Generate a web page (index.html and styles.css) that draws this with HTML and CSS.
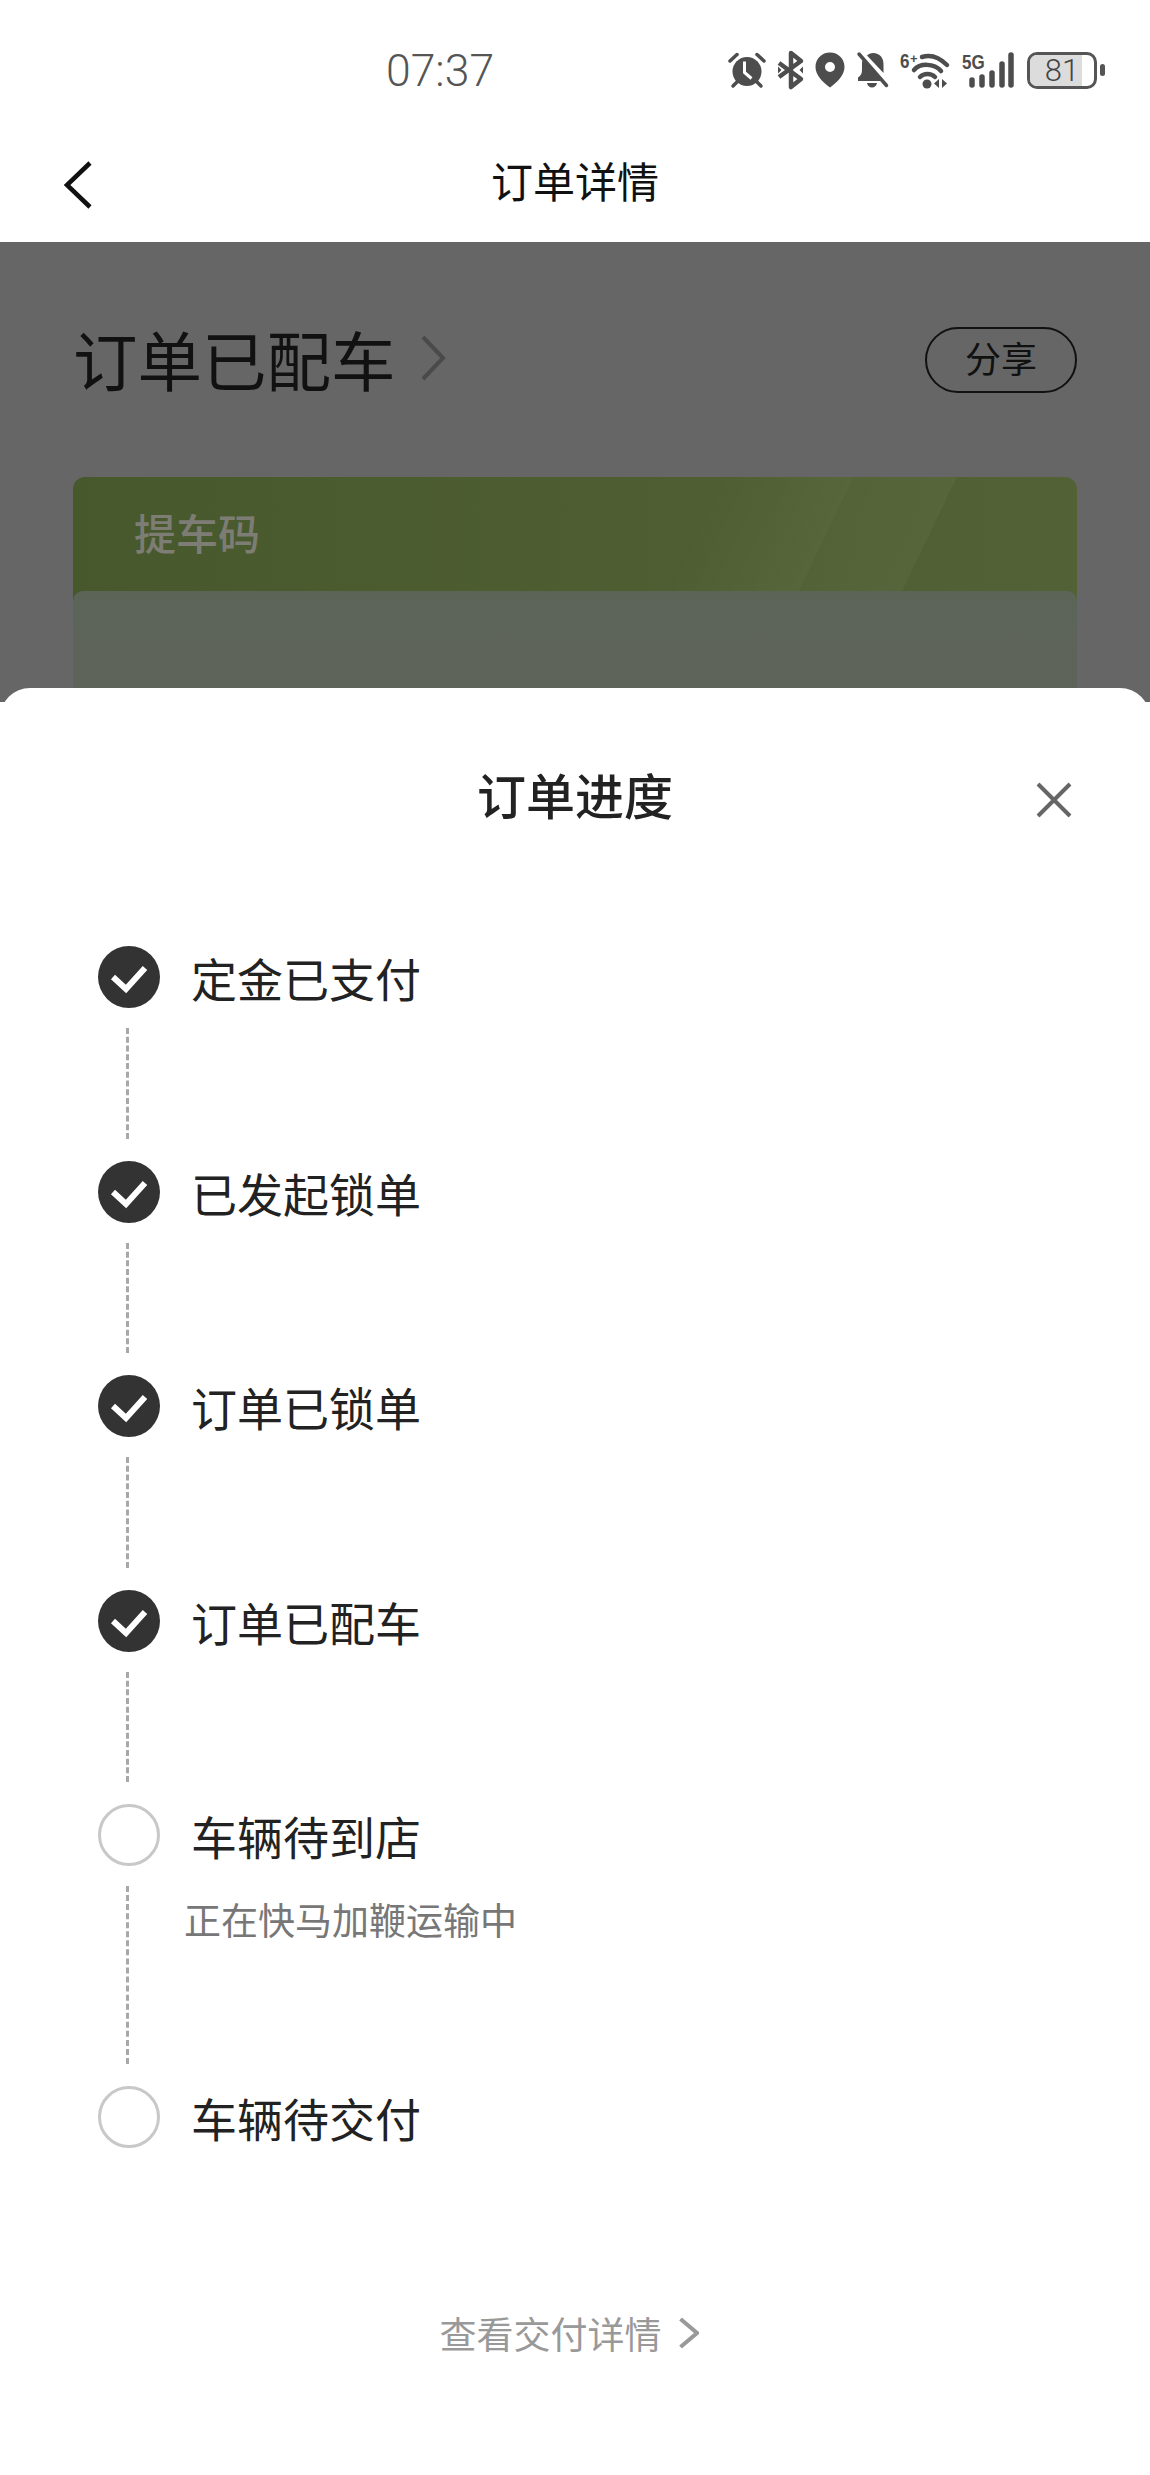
FILE: index.html
```html
<!DOCTYPE html>
<html lang="zh-CN">

<head>
    <meta charset="UTF-8">
    <meta name="viewport" content="width=device-width, initial-scale=1.0">
    <title>订单进度</title>
    <link rel="stylesheet" href="styles.css">
</head>

<body>
    <div class="phone">
        <!-- Status bar -->
        <div class="status-bar">
            <span class="clock">07:37</span>
            <div class="status-icons">
                <svg class="icon-alarm" viewBox="0 0 38 36" width="38" height="36">
                    <path d="M2 9 9 2.500M36 9 29 2.500" fill="none" stroke="#4d4d4d" stroke-width="3.500" stroke-linecap="round"/>
                    <circle cx="19" cy="19.500" r="14.500" fill="#4d4d4d"/>
                    <path d="M5 34l4.500-4.500M33 34l-4.500-4.500" fill="none" stroke="#4d4d4d" stroke-width="3.500" stroke-linecap="round"/>
                    <path d="M16.500 9.500v11l7 6" fill="none" stroke="#fff" stroke-width="3"/>
                </svg>
                <svg class="icon-bt" viewBox="0 0 25 36" width="25" height="36">
                    <path d="M1 11 23 27 13 35V1l10 8L1 25" fill="none" stroke="#4d4d4d" stroke-width="4.500" stroke-linejoin="round"/>
                    <path d="M0 14.500 3.500 18 0 21.500zM25 14.500 21.500 18 25 21.500z" fill="#4d4d4d"/>
                </svg>
                <svg class="icon-pin" viewBox="0 0 30 36" width="30" height="36">
                    <path fill-rule="evenodd" fill="#4d4d4d" d="M15 0.500C6.700 0.500 0.500 6.800 0.500 15c0 8 7.500 15.500 14.500 20.500C22 30.500 29.500 23 29.500 15 29.500 6.800 23.300 0.500 15 0.500zM15 10a5 5 0 1 1 0 10 5 5 0 0 1 0-10z"/>
                </svg>
                <svg class="icon-bell" viewBox="0 0 31 36" width="31" height="36">
                    <path fill="#4d4d4d" d="M6 7 24 26.500V29H1v-3.500c3-2 4-4 4-8V12c0-2 .300-3.500 1-5zM10 3.500C11.500 2 13.500 1 16 1c7 0 10.500 5 10.500 11v9z"/>
                    <path d="M2 2 29.500 33.500" stroke="#4d4d4d" stroke-width="3.500" stroke-linecap="round"/>
                    <path fill="#4d4d4d" d="M10 31h10c-.500 2.800-2.500 4.500-5 4.500S10.500 33.800 10 31z"/>
                </svg>
                <svg class="icon-wifi" viewBox="0 0 50 38" width="50" height="38">
                    <text x="0" y="17" class="tiny" transform="scale(.85 1)">6</text>
                    <text x="10" y="12" class="tiny-plus">+</text>
                    <path d="M22 6C31 3 40 7 47 14M14 19C20 12 34 12 41 20M20 26C24 22 31 22 35 26" fill="none" stroke="#4d4d4d" stroke-width="4.500" stroke-linecap="round"/>
                    <circle cx="27" cy="33" r="4.500" fill="#4d4d4d"/>
                    <path d="M39 28v9l-5-4.500zM42 28v9l5-4.500z" fill="#4d4d4d"/>
                </svg>
                <svg class="icon-signal" viewBox="0 0 53 36" width="53" height="36">
                    <text x="0" y="17" class="tiny" transform="scale(.85 1)">5G</text>
                    <path d="M10 28v5M20 25v8M30 21v12M40 12v21M49 3v30" fill="none" stroke="#4d4d4d" stroke-width="5.500" stroke-linecap="round"/>
                </svg>
                <div class="battery">
                    <div class="battery-body">
                        <div class="battery-level"></div>
                        <span class="battery-text">81</span>
                    </div>
                    <div class="battery-nub"></div>
                </div>
            </div>
        </div>

        <!-- Nav bar -->
        <div class="nav-bar">
            <svg class="back" viewBox="0 0 32 50" width="32" height="50">
                <path d="M28 3 5 25l23 22" fill="none" stroke="#111" stroke-width="4.500"/>
            </svg>
            <h1>订单详情</h1>
        </div>

        <!-- Dimmed page behind the sheet -->
        <div class="dimmed">
            <div class="order-head">
                <div class="order-state">
                    <span>订单已配车</span>
                    <svg viewBox="0 0 26 46" width="26" height="46">
                        <path d="M3 2 23 23 3 44" fill="none" stroke="#4a4a4a" stroke-width="4"/>
                    </svg>
                </div>
                <button class="share">分享</button>
            </div>
            <div class="pickup-card">
                <div class="pickup-title">提车码</div>
                <div class="pickup-inner"></div>
            </div>
        </div>

        <!-- Progress sheet -->
        <div class="sheet">
            <div class="sheet-head">
                <h2>订单进度</h2>
                <svg class="close" viewBox="0 0 36 36" width="36" height="36">
                    <path d="M2 2 34 34M34 2 2 34" stroke="#666" stroke-width="4"/>
                </svg>
            </div>

            <ul class="steps">
                <li class="step done">
                    <div class="marker">
                        <svg class="check" viewBox="0 0 62 62" width="62" height="62">
                            <circle cx="31" cy="31" r="31" fill="#333"/>
                            <path d="M15 31 28 43 47 22" fill="none" stroke="#fff" stroke-width="6"/>
                        </svg>
                        <div class="dash"></div>
                    </div>
                    <div class="step-name">定金已支付</div>
                </li>
                <li class="step done">
                    <div class="marker">
                        <svg class="check" viewBox="0 0 62 62" width="62" height="62">
                            <circle cx="31" cy="31" r="31" fill="#333"/>
                            <path d="M15 31 28 43 47 22" fill="none" stroke="#fff" stroke-width="6"/>
                        </svg>
                        <div class="dash"></div>
                    </div>
                    <div class="step-name">已发起锁单</div>
                </li>
                <li class="step done">
                    <div class="marker">
                        <svg class="check" viewBox="0 0 62 62" width="62" height="62">
                            <circle cx="31" cy="31" r="31" fill="#333"/>
                            <path d="M15 31 28 43 47 22" fill="none" stroke="#fff" stroke-width="6"/>
                        </svg>
                        <div class="dash"></div>
                    </div>
                    <div class="step-name">订单已锁单</div>
                </li>
                <li class="step done">
                    <div class="marker">
                        <svg class="check" viewBox="0 0 62 62" width="62" height="62">
                            <circle cx="31" cy="31" r="31" fill="#333"/>
                            <path d="M15 31 28 43 47 22" fill="none" stroke="#fff" stroke-width="6"/>
                        </svg>
                        <div class="dash"></div>
                    </div>
                    <div class="step-name">订单已配车</div>
                </li>
                <li class="step long">
                    <div class="marker">
                        <div class="ring"></div>
                        <div class="dash"></div>
                    </div>
                    <div>
                        <div class="step-name">车辆待到店</div>
                        <div class="step-note">正在快马加鞭运输中</div>
                    </div>
                </li>
                <li class="step last">
                    <div class="marker">
                        <div class="ring"></div>
                    </div>
                    <div class="step-name">车辆待交付</div>
                </li>
            </ul>

            <div class="sheet-foot">
                <span>查看交付详情</span>
                <svg viewBox="0 0 20 30" width="20" height="30">
                    <path d="M1.500 1 18 15 1.500 29" fill="none" stroke="#999" stroke-width="4"/>
                </svg>
            </div>
        </div>
    </div>
</body>

</html>
```

FILE: styles.css
```css
/* General */
* {
    box-sizing: border-box;
}

body {
    margin: 0;
    font-family: "Noto Sans CJK SC", "Noto Sans", sans-serif;
    background-color: #fff;
}

.phone {
    position: relative;
    width: 1150px;
    height: 2475px;
    overflow: hidden;
}

/* Status bar */
.status-bar {
    display: flex;
    align-items: center;
    height: 130px;
    padding: 12px 45px 0 386px;
}

.clock {
    font-family: Roboto, sans-serif;
    font-weight: 300;
    font-size: 44.500px;
    color: #555;
}

.status-icons {
    display: flex;
    align-items: center;
    gap: 12px;
    margin-top: -2px;
    margin-left: auto;
}

.status-icons svg {
    overflow: visible;
}

.tiny {
    font-family: "Liberation Sans", sans-serif;
    font-size: 20px;
    font-weight: 700;
    fill: #4d4d4d;
}

.tiny-plus {
    font-family: "Liberation Sans", sans-serif;
    font-size: 13px;
    font-weight: 700;
    fill: #4d4d4d;
}

.battery {
    display: flex;
    align-items: center;
    gap: 3px;
}

.battery-body {
    position: relative;
    display: flex;
    justify-content: center;
    align-items: center;
    width: 70px;
    height: 37px;
    border: 3px solid #555;
    border-radius: 10px;
    overflow: hidden;
}

.battery-level {
    position: absolute;
    left: 0;
    top: 0;
    bottom: 0;
    width: 81%;
    background-color: #dcdcdc;
}

.battery-text {
    position: relative;
    font-family: Roboto, sans-serif;
    font-weight: 300;
    font-size: 31px;
    line-height: 31px;
    color: #444;
}

.battery-nub {
    width: 5px;
    height: 12px;
    border-radius: 3px;
    background-color: #555;
}

/* Nav bar */
.nav-bar {
    position: relative;
    display: flex;
    justify-content: center;
    height: 112px;
}

.nav-bar h1 {
    margin: 0;
    font-size: 42px;
    font-weight: 400;
    line-height: 100px;
    color: #111;
}

.back {
    position: absolute;
    left: 62px;
    top: 30px;
}

/* Dimmed page */
.dimmed {
    height: 460px;
    padding: 0 73px;
    background-color: #666;
}

.order-head {
    display: flex;
    justify-content: space-between;
    align-items: center;
    padding-top: 69px;
}

.order-state {
    display: flex;
    align-items: center;
    gap: 24px;
    font-size: 64.500px;
    color: #111;
}

.share {
    width: 152px;
    height: 66px;
    margin-top: 4px;
    padding: 0 0 6px;
    border: 2px solid #111;
    border-radius: 33px;
    background: none;
    font-family: inherit;
    font-size: 36px;
    color: #111;
}

.pickup-card {
    height: 300px;
    margin-top: 72px;
    border-radius: 12px;
    background:
        linear-gradient(115.600deg, transparent 56%, rgba(255, 255, 255, 0.04) 68%, rgba(255, 255, 255, 0.02) 68%, rgba(255, 255, 255, 0.03) 77%, transparent 77%),
        linear-gradient(90deg, #47592c, #536236);
}

.pickup-title {
    height: 114px;
    padding: 24px 0 0 61px;
    font-size: 42px;
    font-weight: 500;
    color: #7d7d76;
}

.pickup-inner {
    height: 186px;
    border-radius: 10px;
    background: linear-gradient(180deg, #5c6458, #60635c);
}

/* Progress sheet */
.sheet {
    position: absolute;
    left: 0;
    right: 0;
    top: 688px;
    bottom: 0;
    padding: 0 62px 0 98px;
    border-radius: 30px 30px 0 0;
    background-color: #fff;
}

.sheet-head {
    position: relative;
    display: flex;
    justify-content: center;
    margin-left: -98px;
    margin-right: -62px;
    padding-top: 71px;
    height: 258px;
}

.sheet-head h2 {
    margin: 0;
    font-size: 49px;
    font-weight: 500;
    line-height: 70px;
    color: #222;
}

.close {
    position: absolute;
    right: 78px;
    top: 94px;
}

.steps {
    margin: 0;
    padding: 0;
    list-style: none;
}

.step {
    display: flex;
    gap: 31px;
    height: 214.500px;
}

.step.long {
    height: 282px;
}

.marker {
    display: flex;
    flex-direction: column;
    width: 62px;
}

.ring {
    width: 62px;
    height: 62px;
    border: 3px solid #c8c8c8;
    border-radius: 50%;
}

.check {
    display: block;
}

.dash {
    flex: 1;
    width: 0;
    margin: 20px 0 22px 28px;
    border-left: 3px dashed #a8a8a8;
}

.step-name {
    font-size: 46px;
    line-height: 62px;
    color: #222;
}

.step-note {
    margin: 27px 0 0 -7px;
    font-size: 37px;
    line-height: 52px;
    color: #777;
}

/* Footer link */
.sheet-foot {
    display: flex;
    justify-content: center;
    align-items: center;
    gap: 17px;
    margin: 0 -62px 0 -98px;
    padding: 5px 12px 0 0;
    font-size: 37px;
    color: #999;
}
```
